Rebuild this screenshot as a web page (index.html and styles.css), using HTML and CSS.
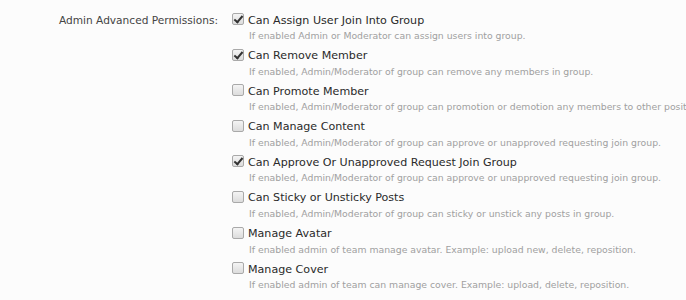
FILE: index.html
```html
<!DOCTYPE html>
<html lang="en">
<head>
    <meta charset="UTF-8">
    <title>Group Permissions</title>
    <link rel="stylesheet" href="styles.css">
</head>
<body>
    <!-- Admin permissions block -->
    <dl class="ctrl-unit">
        <dt class="ctrl-label">Admin Advanced Permissions:</dt>
        <dd class="ctrl-options">
            <ul class="perm-list">
                <li class="perm">
                    <label class="perm-title"><input type="checkbox" checked> Can Assign User Join Into Group</label>
                    <p class="perm-hint">If enabled Admin or Moderator can assign users into group.</p>
                </li>
                <li class="perm">
                    <label class="perm-title"><input type="checkbox" checked> Can Remove Member</label>
                    <p class="perm-hint">If enabled, Admin/Moderator of group can remove any members in group.</p>
                </li>
                <li class="perm">
                    <label class="perm-title"><input type="checkbox"> Can Promote Member</label>
                    <p class="perm-hint">If enabled, Admin/Moderator of group can promotion or demotion any members to other position.</p>
                </li>
                <li class="perm">
                    <label class="perm-title"><input type="checkbox"> Can Manage Content</label>
                    <p class="perm-hint">If enabled, Admin/Moderator of group can approve or unapproved requesting join group.</p>
                </li>
                <li class="perm">
                    <label class="perm-title"><input type="checkbox" checked> Can Approve Or Unapproved Request Join Group</label>
                    <p class="perm-hint">If enabled, Admin/Moderator of group can approve or unapproved requesting join group.</p>
                </li>
                <li class="perm">
                    <label class="perm-title"><input type="checkbox"> Can Sticky or Unsticky Posts</label>
                    <p class="perm-hint">If enabled, Admin/Moderator of group can sticky or unstick any posts in group.</p>
                </li>
                <li class="perm">
                    <label class="perm-title"><input type="checkbox"> Manage Avatar</label>
                    <p class="perm-hint">If enabled admin of team manage avatar. Example: upload new, delete, reposition.</p>
                </li>
                <li class="perm">
                    <label class="perm-title"><input type="checkbox"> Manage Cover</label>
                    <p class="perm-hint">If enabled admin of team can manage cover. Example: upload, delete, reposition.</p>
                </li>
            </ul>
        </dd>
    </dl>
</body>
</html>
```

FILE: styles.css
```css
/* Page basics */
body {
    font-family: "DejaVu Sans", Verdana, sans-serif;
    background-color: #fcfcfc;
    color: #333;
    margin: 0;
    padding: 0;
    overflow: hidden;
}

/* Two column control row: label on the left, options on the right */
.ctrl-unit {
    display: grid;
    grid-template-columns: 218px 1fr;
    margin: 0;
    padding-top: 12px;
}

.ctrl-label {
    text-align: right;
    font-size: 10.6px;
    color: #444;
    padding-top: 2px;
}

.ctrl-options {
    margin: 0;
    padding-left: 14px;
    white-space: nowrap;
    overflow: hidden;
}

/* Permission list */
.perm-list {
    list-style: none;
    margin: 0;
    padding: 0;
}

.perm {
    height: 35.6px;
}

.perm-title {
    display: flex;
    align-items: center;
    gap: 4px;
    font-size: 11.1px;
    color: #2a2a2a;
    padding-top: 1px;
}

/* Old-style grey checkbox */
.perm-title input {
    appearance: none;
    width: 12px;
    height: 12px;
    margin: 0 0 2px 0;
    border: 1px solid #a9a9a9;
    border-radius: 2px;
    background: linear-gradient(#f4f4f4, #dcdcdc);
    position: relative;
}

.perm-title input:checked::after {
    content: "";
    position: absolute;
    left: 3px;
    top: 0px;
    width: 3px;
    height: 7px;
    border: solid #333;
    border-width: 0 2px 2px 0;
    transform: rotate(40deg);
}

.perm-hint {
    margin: 3px 0 0 17px;
    font-size: 9.3px;
    color: #a0a0a0;
}
```
